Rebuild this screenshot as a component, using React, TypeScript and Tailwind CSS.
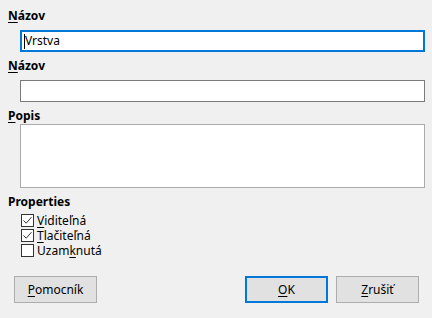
import React from "react";

const font = { fontFamily: '"Noto Sans", "Open Sans", sans-serif' };

function Label({ u, rest }: { u: string; rest: string }) {
  return (
    <div className="h-4 pl-2 text-[12px] leading-4 font-bold text-black">
      <span className="underline underline-offset-2">{u}</span>
      {rest}
    </div>
  );
}

function Check({ checked, before, u, after }: { checked: boolean; before: string; u: string; after: string }) {
  return (
    <div className="flex h-[15px] items-center pl-[21px]">
      <div className="flex h-[13px] w-[13px] shrink-0 items-center justify-center border border-[#333333] bg-white">
        {checked && (
          <svg width="11" height="11" viewBox="0 0 11 11">
            <path d="M1.5 5.5 L4.2 8.2 L9.5 2.2" fill="none" stroke="#333333" strokeWidth="1" />
          </svg>
        )}
      </div>
      <span className="ml-[3px] text-[12px] leading-[15px] text-black">
        {before}
        <span className="underline underline-offset-2">{u}</span>
        {after}
      </span>
    </div>
  );
}

function Button({ u, rest, focused }: { u: string; rest: string; focused?: boolean }) {
  return (
    <button
      className={
        "flex h-[27px] w-[83px] items-center justify-center bg-[#e1e1e1] text-[12px] leading-4 text-black " +
        (focused ? "border-2 border-[#0078d7]" : "border border-[#adadad]")
      }
    >
      <span className="underline underline-offset-2">{u}</span>
      {rest}
    </button>
  );
}

export default function App() {
  return (
    <div className="h-[318px] w-[432px] overflow-hidden bg-[#f0f0f0]" style={font}>
      <div className="flex flex-col pt-2">
        <Label u="N" rest="ázov" />
        <div className="mt-1.5 ml-5 mr-[7px] flex h-[22px] items-center border-2 border-[#0078d7] bg-white pl-[2px] text-[12px] text-black">
          <span className="h-[15px] w-px bg-black" />
          <span>Vrstva</span>
        </div>

        <div className="mt-1.5">
          <Label u="N" rest="ázov" />
        </div>
        <div className="mt-1.5 ml-5 mr-[7px] h-[22px] border border-[#7a7a7a] bg-white" />

        <div className="mt-1.5">
          <Label u="P" rest="opis" />
        </div>
        <div className="ml-5 mr-[7px] h-16 border border-[#ababab] bg-white" />

        <div className="mt-1.5">
          <div className="h-4 pl-2 text-[12px] leading-4 font-bold text-black">Properties</div>
        </div>
        <div className="mt-[3px] flex flex-col">
          <Check checked before="" u="V" after="iditeľná" />
          <Check checked before="" u="T" after="lačiteľná" />
          <Check checked={false} before="Uzam" u="k" after="nutá" />
        </div>

        <div className="mt-[18px] flex items-center pl-[14px] pr-[13px]">
          <Button u="P" rest="omocník" />
          <div className="flex-1" />
          <Button u="O" rest="K" focused />
          <div className="w-2" />
          <Button u="Z" rest="rušiť" />
        </div>
      </div>
    </div>
  );
}
